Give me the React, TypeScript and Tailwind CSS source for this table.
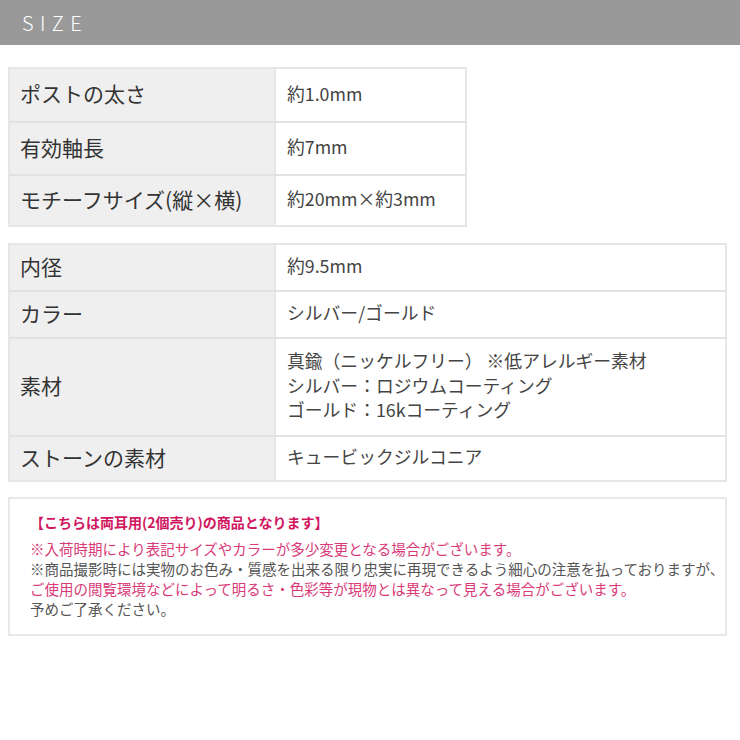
const font = { fontFamily: '"Noto Sans CJK JP", "Noto Sans", sans-serif' };

type Row = { label: string; value: string[]; h: string };

const specs1: Row[] = [
  { label: "ポストの太さ", value: ["約1.0mm"], h: "h-[52px]" },
  { label: "有効軸長", value: ["約7mm"], h: "h-[53px]" },
  { label: "モチーフサイズ(縦×横)", value: ["約20mm×約3mm"], h: "h-[51px]" },
];

const specs2: Row[] = [
  { label: "内径", value: ["約9.5mm"], h: "h-[45px]" },
  { label: "カラー", value: ["シルバー/ゴールド"], h: "h-[47px]" },
  {
    label: "素材",
    value: ["真鍮（ニッケルフリー） ※低アレルギー素材", "シルバー：ロジウムコーティング", "ゴールド：16kコーティング"],
    h: "h-[98px]",
  },
  { label: "ストーンの素材", value: ["キュービックジルコニア"], h: "h-[45px]" },
];

// heights include the 2px row divider (border-box)
function SpecTable({ rows, width }: { rows: Row[]; width: string }) {
  return (
    <div className={`${width} border-2 border-[#e6e6e6] ml-2`}>
      {rows.map((r, i) => (
        <div key={i} className={`flex ${r.h} ${i > 0 ? "border-t-2 border-[#e2e2e2]" : ""}`}>
          <div className="w-[264px] shrink-0 bg-[#efefef] flex items-center pl-[10px] pb-[4px] text-[21px] leading-[28px] text-[#333]">
            {r.label}
          </div>
          <div className="flex-1 border-l-2 border-[#e6e6e6] flex flex-col justify-center pl-[11px] pb-[4px] text-[17.8px] leading-[24.5px] text-[#444]">
            {r.value.map((v, j) => (
              <div key={j}>{v}</div>
            ))}
          </div>
        </div>
      ))}
    </div>
  );
}

export default function App() {
  return (
    <div className="w-[740px] h-[740px] bg-white" style={font}>
      <div className="h-[45px] bg-[#999999] flex items-center pl-[22px]">
        <span className="text-white text-[20px] font-light tracking-[0.32em]">SIZE</span>
      </div>

      <div className="mt-[22px]">
        <SpecTable rows={specs1} width="w-[459px]" />
      </div>

      <div className="mt-[16px]">
        <SpecTable rows={specs2} width="w-[719px]" />
      </div>

      <div className="mt-[15px] ml-2 w-[719px] h-[139px] border-2 border-[#e8e8e8] pl-[20px] pt-[13px] text-[14.5px] leading-[20px]">
        <div className="font-bold text-[14px] text-[#d1175f] mb-[7px]">【こちらは両耳用(2個売り)の商品となります】</div>
        <div className="text-[#d93a78]">※入荷時期により表記サイズやカラーが多少変更となる場合がございます。</div>
        <div className="text-[#555]">※商品撮影時には実物のお色み・質感を出来る限り忠実に再現できるよう細心の注意を払っておりますが、</div>
        <div className="text-[#d93a78]">ご使用の閲覧環境などによって明るさ・色彩等が現物とは異なって見える場合がございます。</div>
        <div className="text-[#555]">予めご了承ください。</div>
      </div>
    </div>
  );
}
